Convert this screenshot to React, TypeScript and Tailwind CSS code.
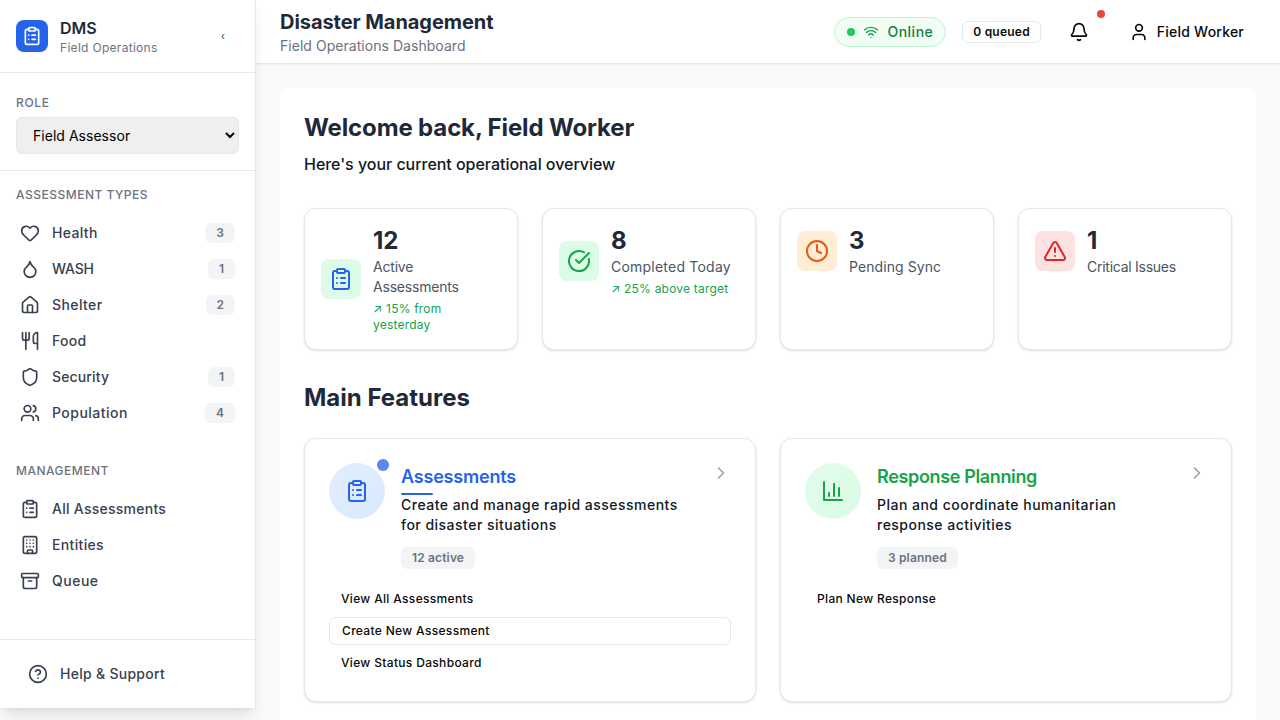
import type { ReactNode } from "react";
import {
  Archive,
  Bell,
  Building,
  ChevronRight,
  CircleCheckBig,
  CircleQuestionMark,
  ClipboardList,
  Clock,
  Droplet,
  Heart,
  House,
  Shield,
  TriangleAlert,
  User,
  Users,
  Utensils,
  Wifi,
  type LucideIcon,
} from "lucide-react";

type NavEntry = { label: string; icon: LucideIcon; count?: number; tracking: string };

const assessmentTypes: NavEntry[] = [
  { label: "Health", icon: Heart, count: 3, tracking: "tracking-[0.35px]" },
  { label: "WASH", icon: Droplet, count: 1, tracking: "tracking-[-0.2px]" },
  { label: "Shelter", icon: House, count: 2, tracking: "tracking-[0.4px]" },
  { label: "Food", icon: Utensils, tracking: "tracking-[0.25px]" },
  { label: "Security", icon: Shield, count: 1, tracking: "tracking-[0.15px]" },
  { label: "Population", icon: Users, count: 4, tracking: "tracking-[0.47px]" },
];

const management: NavEntry[] = [
  { label: "All Assessments", icon: ClipboardList, tracking: "tracking-[0.26px]" },
  { label: "Entities", icon: Building, tracking: "tracking-[0.35px]" },
  { label: "Queue", icon: Archive, tracking: "tracking-[0.5px]" },
];

function NavSection({ title, items }: { title: string; items: NavEntry[] }) {
  return (
    <section>
      <h3 className="mb-3 text-xs font-medium tracking-[0.5px] text-[#6b7280] uppercase">{title}</h3>
      <ul>
        {items.map(({ label, icon: Icon, count, tracking }) => (
          <li key={label} className="flex h-9 items-center gap-3 px-1 text-[#374151]">
            <Icon className="size-5" strokeWidth={2} />
            <span className={`flex-1 text-sm font-medium ${tracking}`}>{label}</span>
            {count !== undefined && (
              <span className="rounded-md bg-[#f3f4f6] px-[11px] py-0.5 text-xs font-semibold text-[#6b7280]">{count}</span>
            )}
          </li>
        ))}
      </ul>
    </section>
  );
}

function Sidebar() {
  return (
    <aside className="relative z-20 flex h-[708px] w-64 shrink-0 flex-col border-r border-[#e5e7eb] bg-white shadow-[0_10px_15px_-3px_rgba(0,0,0,0.1),0_4px_6px_-4px_rgba(0,0,0,0.1)]">
      <div className="flex h-[73px] shrink-0 items-center gap-3 border-b border-[#e5e7eb] px-4">
        <div className="flex size-8 items-center justify-center rounded-lg bg-[#2563eb] text-white">
          <ClipboardList className="size-5" />
        </div>
        <div className="flex-1">
          <h2 className="text-base leading-6 font-semibold text-[#1f2937]">DMS</h2>
          <p className="text-xs leading-4 tracking-[0.3px] text-[#6b7280]">Field Operations</p>
        </div>
        <button className="w-8 text-center text-[11px] leading-4 font-light text-[#0a0a0a]">‹</button>
      </div>
      <div className="shrink-0 border-b border-[#e5e7eb] px-4 pt-[22px] pb-4">
        <label className="mb-1.5 block text-xs font-medium tracking-[0.7px] text-[#6b7280]">ROLE</label>
        <select className="block h-[37px] w-full rounded-md border border-[#e5e7eb] bg-[#efefef] px-3 text-sm tracking-[0.03px] text-black">
          <option>Field Assessor</option>
        </select>
      </div>
      <nav className="flex flex-1 flex-col gap-8 p-4">
        <NavSection title="Assessment Types" items={assessmentTypes} />
        <NavSection title="Management" items={management} />
      </nav>
      <div className="shrink-0 border-t border-[#e5e7eb] p-4">
        <a className="flex h-9 items-center gap-3 px-3 text-sm font-medium tracking-[0.28px] text-[#374151]">
          <CircleQuestionMark className="size-5" />
          Help &amp; Support
        </a>
      </div>
    </aside>
  );
}

function Header() {
  return (
    <header className="relative z-10 flex h-16 shrink-0 items-center justify-between border-b border-[#e5e7eb] bg-white px-6 shadow-[0_1px_2px_0_rgba(0,0,0,0.05)]">
      <div>
        <h1 className="text-xl leading-7 font-bold tracking-[-0.06px] text-[#1f2937]">Disaster Management</h1>
        <p className="text-sm leading-5 tracking-[0.04px] text-[#6b7280]">Field Operations Dashboard</p>
      </div>
      <div className="flex items-center">
        <div className="flex h-[30px] items-center gap-2 rounded-full border border-[#bbf7d0] bg-[#f0fdf4] px-3 text-[#15803d]">
          <span className="size-2 rounded-full bg-[#22c55e]" />
          <Wifi className="size-4 text-[#16a34a]" />
          <span className="text-sm font-medium tracking-[0.5px]">Online</span>
        </div>
        <span className="ml-4 rounded-md border border-[#e5e7eb] px-2.5 py-0.5 text-xs font-semibold tracking-[0.22px] text-[#0a0a0a]">0 queued</span>
        <button className="relative ml-4 flex h-9 w-11 items-center justify-center text-[#0a0a0a]">
          <Bell className="size-5" />
          <span className="absolute -top-1 -right-1 size-2 rounded-full bg-[#ef4444]" />
        </button>
        <button className="ml-4 flex items-center gap-2 px-3 text-sm font-medium tracking-[0.22px] text-[#0a0a0a]">
          <User className="size-5" />
          Field Worker
        </button>
      </div>
    </header>
  );
}

const cardShadow = "shadow-[0_1px_3px_0_rgba(0,0,0,0.1),0_1px_2px_-1px_rgba(0,0,0,0.1)]";

type Stat = { value: string; label: string; trend?: string; icon: LucideIcon; tone: string; tracking: string };

const stats: Stat[] = [
  { value: "12", label: "Active Assessments", trend: "↗ 15% from yesterday", icon: ClipboardList, tone: "bg-[#dcfce7] text-[#2563eb]", tracking: "tracking-[-0.2px]" },
  { value: "8", label: "Completed Today", trend: "↗ 25% above target", icon: CircleCheckBig, tone: "bg-[#dcfce7] text-[#16a34a]", tracking: "tracking-[0.22px]" },
  { value: "3", label: "Pending Sync", icon: Clock, tone: "bg-[#ffedd5] text-[#ea580c]", tracking: "tracking-[0.08px]" },
  { value: "1", label: "Critical Issues", icon: TriangleAlert, tone: "bg-[#fee2e2] text-[#dc2626]", tracking: "tracking-[-0.26px]" },
];

function StatCard({ value, label, trend, icon: Icon, tone, tracking }: Stat) {
  return (
    <div className={`rounded-xl border border-[#e5e7eb] bg-white p-4 ${cardShadow}`}>
      <div className="flex items-center gap-3">
        <div className={`flex size-10 shrink-0 items-center justify-center rounded-lg ${tone}`}>
          <Icon className="size-6" />
        </div>
        <div className="flex-1">
          <p className="text-2xl leading-8 font-bold text-[#1f2937]">{value}</p>
          <p className={`text-sm leading-5 text-[#4b5563] ${tracking}`}>{label}</p>
          {trend && <p className="mt-1 text-xs leading-4 tracking-[0.2px] text-[#16a34a]">{trend}</p>}
        </div>
      </div>
    </div>
  );
}

function ColumnsIcon() {
  return (
    <svg className="size-6" viewBox="0 0 24 24" fill="none" stroke="currentColor" strokeWidth={2} strokeLinecap="round" strokeLinejoin="round">
      <path d="M3 3v18h18M18 17V9M13 17V5M8 17v-3" />
    </svg>
  );
}

type FeatureProps = {
  title: string;
  titleTracking: string;
  description: string;
  badge: string;
  icon: ReactNode;
  circle: string;
  color: string;
  active?: boolean;
  actions: { label: string; outlined?: boolean }[];
};

function FeatureCard({ title, titleTracking, description, badge, icon, circle, color, active, actions }: FeatureProps) {
  return (
    <article className={`h-[264px] rounded-xl border border-[#e5e7eb] bg-white p-6 ${cardShadow}`}>
      <div className="flex items-start">
        <div className={`relative mr-4 flex size-14 shrink-0 items-center justify-center rounded-full bg-linear-to-br ${circle} ${color}`}>
          {icon}
          {active && <span className="absolute -top-1 -right-1 size-3 rounded-full bg-[#5b87ee]" />}
        </div>
        <div className="w-[290px]">
          <h3 className={`relative mb-1 text-lg leading-7 font-semibold ${titleTracking} ${color}`}>
            {title}
            {active && <span className="absolute -bottom-1 left-0 h-0.5 w-8 rounded-full bg-[#2563eb]" />}
          </h3>
          <p className="text-sm leading-5 font-medium tracking-[0.48px] text-[#111827]">{description}</p>
          <span className="mt-3 inline-block rounded-md bg-[#f3f4f6] px-[11px] py-[3px] align-top text-xs font-semibold tracking-[0.15px] text-[#6b7280]">{badge}</span>
        </div>
        <ChevronRight className="ml-auto size-5 text-[#9ca3af]" />
      </div>
      <div className="mt-4 flex flex-col gap-1">
        {actions.map(({ label, outlined }) => (
          <button
            key={label}
            className={`h-7 rounded-md px-3 text-left text-xs font-medium tracking-[0.33px] text-[#0a0a0a] ${outlined ? "border border-[#e5e7eb]" : ""}`}
          >
            {label}
          </button>
        ))}
      </div>
    </article>
  );
}

export default function App() {
  return (
    <div className="flex h-[720px] overflow-hidden bg-[#f9fafb] font-[Inter,sans-serif]">
      <Sidebar />
      <div className="flex min-w-0 flex-1 flex-col">
        <Header />
        <main className="flex-1 overflow-hidden px-6 pt-6">
          <div className="h-[900px] rounded-lg bg-white p-6">
            <h2 className="text-2xl leading-8 font-bold tracking-[-0.14px] text-[#1f2937]">Welcome back, Field Worker</h2>
            <p className="mt-2 text-base leading-6 font-medium tracking-[-0.035px] text-[#111827]">Here's your current operational overview</p>
            <div className="mt-8 grid grid-cols-4 gap-6">
              {stats.map((stat) => (
                <StatCard key={stat.label} {...stat} />
              ))}
            </div>
            <h2 className="mt-8 mb-6 text-2xl leading-8 font-bold text-[#1f2937]">Main Features</h2>
            <div className="grid grid-cols-2 gap-6">
              <FeatureCard
                title="Assessments"
                titleTracking="tracking-[-0.2px]"
                description="Create and manage rapid assessments for disaster situations"
                badge="12 active"
                icon={<ClipboardList className="size-6" />}
                circle="from-[#e3eefe] to-[#d9e9fe]"
                color="text-[#2563eb]"
                active
                actions={[
                  { label: "View All Assessments" },
                  { label: "Create New Assessment", outlined: true },
                  { label: "View Status Dashboard" },
                ]}
              />
              <FeatureCard
                title="Response Planning"
                titleTracking="tracking-[-0.35px]"
                description="Plan and coordinate humanitarian response activities"
                badge="3 planned"
                icon={<ColumnsIcon />}
                circle="from-[#e2fdeb] to-[#d9fbe5]"
                color="text-[#16a34a]"
                actions={[{ label: "Plan New Response" }]}
              />
            </div>
          </div>
        </main>
      </div>
    </div>
  );
}
